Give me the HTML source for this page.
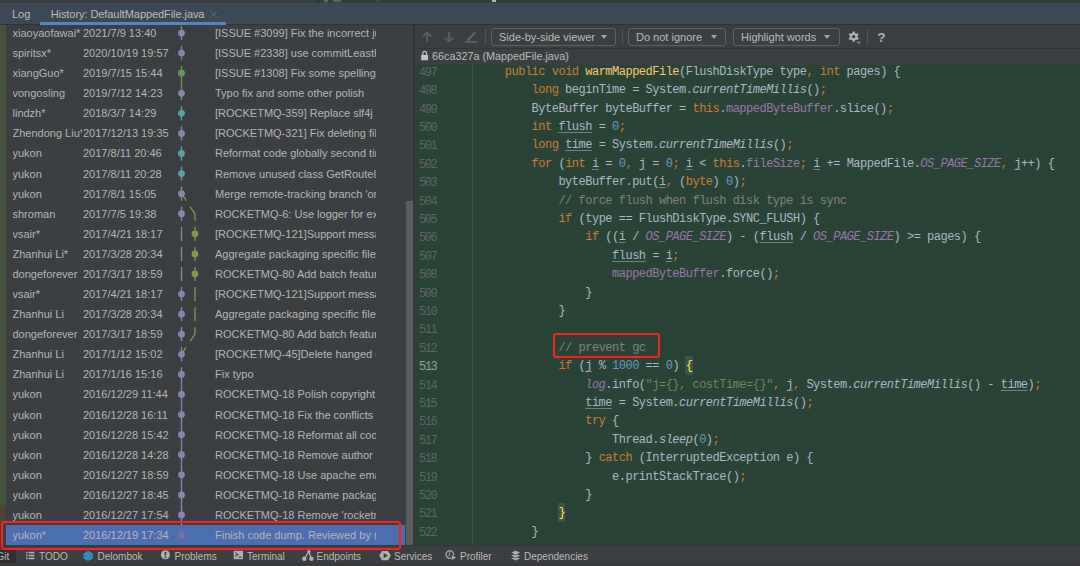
<!DOCTYPE html><html><head><meta charset="utf-8"><style>
*{margin:0;padding:0;box-sizing:border-box}
html,body{width:1080px;height:566px;overflow:hidden;background:#3c3f41;font-family:"Liberation Sans",sans-serif}
.abs{position:absolute}
#topl{left:0;top:0;width:318px;height:2px;background:#3b3d3f}#topline{left:0;top:2px;width:1080px;height:1px;background:#383c44}#tabline{left:0;top:24px;width:1080px;height:1px;background:#323538}
#topr{left:318px;top:0;width:762px;height:2px;background:#2a4434}
#tabs{left:0;top:3px;width:1080px;height:22px;background:#3d4856}
.tab{position:absolute;top:4px;font-size:11px;color:#bbbbbb;line-height:14px}
#uline{left:40.4px;top:22px;width:185.5px;height:2.6px;background:#4a88c7}
#left{left:0;top:25px;width:414px;height:520px;background:#3c3f41;overflow:hidden}
#gstrip{left:0;top:25px;width:6px;height:480px;background:#44523f}
#bstrip{left:0;top:505px;width:6px;height:20px;background:#4d4532}
.row{position:absolute;left:0;width:406px;height:20.08px;font-size:11px;color:#b5b5b5;line-height:20px;white-space:nowrap}
.row.sel{background:#4b6eaf;left:6px;width:400px}.row.sel .au{left:6.5px}.row.sel .dt{left:77px}.row.sel .msg{left:209px}
.au{position:absolute;left:12.5px;width:69px;overflow:hidden}
.dt{position:absolute;left:83px}
.msg{position:absolute;left:215px;width:161px;overflow:hidden}
#track{left:405px;top:25px;width:8px;height:520px;background:#3d4042}
#thumb{left:406px;top:201px;width:7.3px;height:343.5px;background:#5a5c5e}
#div{left:413px;top:25px;width:2px;height:520px;background:#323436}
#tb{left:415px;top:25px;width:665px;height:23px;background:#3c3f41}
#tbline{left:415px;top:48px;width:665px;height:1px;background:#323436}
#hdr{left:415px;top:49px;width:665px;height:16px;background:#3c3f41}
#hdrtxt{left:432px;top:50px;font-size:10.8px;line-height:13px;color:#bbbbbb}
.combo{position:absolute;top:28px;height:18px;border:1px solid #5e6162;border-radius:3px;font-size:11px;line-height:16px;color:#bbbbbb;padding-left:7px}
.tri{position:absolute;top:6px;width:0;height:0;border-left:3.7px solid transparent;border-right:3.7px solid transparent;border-top:4.5px solid #a0a3a5}
.sep{position:absolute;top:29px;width:1px;height:16px;background:#515455}
#code{left:415px;top:65px;width:665px;height:480px;background:#294436;overflow:hidden}
.ln{position:absolute;left:419px;width:30px;font-family:"Liberation Mono",monospace;font-size:12px;letter-spacing:-1.45px;line-height:18px;color:#606366;white-space:pre}
.ln.cur{color:#9c9c9c}
.cl{position:absolute;left:478px;font-family:"Liberation Mono",monospace;font-size:12px;letter-spacing:-0.5px;line-height:18px;color:#a9b7c6;white-space:pre}
.k{color:#cc7832}.fn{color:#ffc66d}.n{color:#6897bb}.f{color:#9876aa}.c{color:#808080}.s{color:#6a8759}
u{text-decoration:underline;text-decoration-thickness:1px;text-decoration-color:rgba(169,183,198,0.55);text-underline-offset:2px}
.bm{color:#ffef28;background:#3c5450;padding:3.4px 0.3px 1.5px 0.3px;margin:0 -0.3px}
#gutline{left:472px;top:65px;width:1px;height:480px;background:#3d5446}
#status{left:0;top:545px;width:1080px;height:17.5px;background:#3c3f41;border-top:1px solid #343638}
#sbot{left:0;top:562.5px;width:1080px;height:3.5px;background:#37393b}
#gittab{left:0;top:550px;width:16px;height:12.5px;background:#2d2f30}
.st{position:absolute;top:550px;font-size:10px;line-height:13px;color:#bbbbbb;white-space:nowrap}
.redbox{position:absolute;border:2.7px solid #ff1f1f;border-radius:3px}
</style></head><body><div id="topl" class="abs"></div><div id="topr" class="abs"></div>
<div id="tabs" class="abs"><div class="tab" style="left:12px">Log</div><div class="tab" style="left:50.7px;letter-spacing:-0.07px">History: DefaultMappedFile.java</div></div>
<div class="abs" style="left:317px;top:0;width:2px;height:2px;background:#333"></div><div class="abs" style="left:324px;top:0;width:4px;height:2px;background:#5b6660"></div><div class="abs" style="left:333px;top:0;width:8px;height:2px;background:#56625a"></div><div class="abs" style="left:377px;top:0;width:1px;height:2px;background:#5f625f"></div><div class="abs" style="left:491.5px;top:0;width:4px;height:2px;background:#a9b4bc"></div>
<div id="topline" class="abs"></div><div id="tabline" class="abs"></div><div id="uline" class="abs"></div>
<div id="left" class="abs"><div class="row" style="top:-2.00px"><span class="au">xiaoyaofawai*</span><span class="dt">2021/7/9 13:40</span><span class="msg">[ISSUE #3099] Fix the incorrect judgement</span></div><div class="row" style="top:18.08px"><span class="au">spiritsx*</span><span class="dt">2020/10/19 19:57</span><span class="msg">[ISSUE #2338] use commitLeastPages</span></div><div class="row" style="top:38.16px"><span class="au">xiangGuo*</span><span class="dt">2019/7/15 15:44</span><span class="msg">[ISSUE #1308] Fix some spelling errors</span></div><div class="row" style="top:58.24px"><span class="au">vongosling</span><span class="dt">2019/7/12 14:23</span><span class="msg">Typo fix and some other polish</span></div><div class="row" style="top:78.32px"><span class="au">lindzh*</span><span class="dt">2018/3/7 14:29</span><span class="msg">[ROCKETMQ-359] Replace slf4j api</span></div><div class="row" style="top:98.40px"><span class="au">Zhendong Liu*</span><span class="dt">2017/12/13 19:35</span><span class="msg">[ROCKETMQ-321] Fix deleting file</span></div><div class="row" style="top:118.48px"><span class="au">yukon</span><span class="dt">2017/8/11 20:46</span><span class="msg">Reformat code globally second time</span></div><div class="row" style="top:138.56px"><span class="au">yukon</span><span class="dt">2017/8/11 20:28</span><span class="msg">Remove unused class GetRouteInfo</span></div><div class="row" style="top:158.64px"><span class="au">yukon</span><span class="dt">2017/8/1 15:05</span><span class="msg">Merge remote-tracking branch &#x27;origin</span></div><div class="row" style="top:178.72px"><span class="au">shroman</span><span class="dt">2017/7/5 19:38</span><span class="msg">ROCKETMQ-6: Use logger for exceptions</span></div><div class="row" style="top:198.80px"><span class="au">vsair*</span><span class="dt">2017/4/21 18:17</span><span class="msg">[ROCKETMQ-121]Support message</span></div><div class="row" style="top:218.88px"><span class="au">Zhanhui Li*</span><span class="dt">2017/3/28 20:34</span><span class="msg">Aggregate packaging specific files</span></div><div class="row" style="top:238.96px"><span class="au">dongeforever</span><span class="dt">2017/3/17 18:59</span><span class="msg">ROCKETMQ-80 Add batch feature</span></div><div class="row" style="top:259.04px"><span class="au">vsair*</span><span class="dt">2017/4/21 18:17</span><span class="msg">[ROCKETMQ-121]Support message</span></div><div class="row" style="top:279.12px"><span class="au">Zhanhui Li</span><span class="dt">2017/3/28 20:34</span><span class="msg">Aggregate packaging specific files</span></div><div class="row" style="top:299.20px"><span class="au">dongeforever</span><span class="dt">2017/3/17 18:59</span><span class="msg">ROCKETMQ-80 Add batch feature</span></div><div class="row" style="top:319.28px"><span class="au">Zhanhui Li</span><span class="dt">2017/1/12 15:02</span><span class="msg">[ROCKETMQ-45]Delete hanged code</span></div><div class="row" style="top:339.36px"><span class="au">Zhanhui Li</span><span class="dt">2017/1/16 15:16</span><span class="msg">Fix typo</span></div><div class="row" style="top:359.44px"><span class="au">yukon</span><span class="dt">2016/12/29 11:44</span><span class="msg">ROCKETMQ-18 Polish copyright and</span></div><div class="row" style="top:379.52px"><span class="au">yukon</span><span class="dt">2016/12/28 16:11</span><span class="msg">ROCKETMQ-18 Fix the conflicts between</span></div><div class="row" style="top:399.60px"><span class="au">yukon</span><span class="dt">2016/12/28 15:42</span><span class="msg">ROCKETMQ-18 Reformat all code</span></div><div class="row" style="top:419.68px"><span class="au">yukon</span><span class="dt">2016/12/28 14:28</span><span class="msg">ROCKETMQ-18 Remove author and</span></div><div class="row" style="top:439.76px"><span class="au">yukon</span><span class="dt">2016/12/27 18:59</span><span class="msg">ROCKETMQ-18 Use apache email</span></div><div class="row" style="top:459.84px"><span class="au">yukon</span><span class="dt">2016/12/27 18:45</span><span class="msg">ROCKETMQ-18 Rename packages</span></div><div class="row" style="top:479.92px"><span class="au">yukon</span><span class="dt">2016/12/27 17:54</span><span class="msg">ROCKETMQ-18 Remove &#x27;rocketmq</span></div><div class="row sel" style="top:500.00px"><span class="au">yukon*</span><span class="dt">2016/12/19 17:34</span><span class="msg">Finish code dump. Reviewed by (Adam</span></div></div>
<div id="gstrip" class="abs"></div><div id="bstrip" class="abs"></div>
<div id="track" class="abs"></div><div id="thumb" class="abs"></div><div id="div" class="abs"></div>
<div id="tb" class="abs"></div><div id="tbline" class="abs"></div><div id="hdr" class="abs"></div>
<div id="hdrtxt" class="abs">66ca327a (MappedFile.java)</div>
<div class="combo" style="left:491px;width:125px">Side-by-side viewer<div class="tri" style="left:108.5px"></div></div>
<div class="sep" style="left:485px"></div><div class="sep" style="left:622px"></div><div class="sep" style="left:867px"></div>
<div class="combo" style="left:628px;width:98px">Do not ignore<div class="tri" style="left:81.5px"></div></div>
<div class="combo" style="left:733px;width:107px">Highlight words<div class="tri" style="left:90.3px"></div></div>
<div id="code" class="abs"></div><div id="gutline" class="abs"></div>
<div class="ln" style="top:63.70px">497</div><div class="cl" style="top:62.70px">    <span class="k">public</span> <span class="k">void</span> <span class="fn">warmMappedFile</span>(FlushDiskType type<span class="k">,</span> <span class="k">int</span> pages) {</div><div class="ln" style="top:82.10px">498</div><div class="cl" style="top:81.10px">        <span class="k">long</span> beginTime = System.<i>currentTimeMillis</i>()<span class="k">;</span></div><div class="ln" style="top:100.50px">499</div><div class="cl" style="top:99.50px">        ByteBuffer byteBuffer = <span class="k">this</span>.<span class="f">mappedByteBuffer</span>.slice()<span class="k">;</span></div><div class="ln" style="top:118.90px">500</div><div class="cl" style="top:117.90px">        <span class="k">int</span> <u>flush</u> = <span class="n">0</span><span class="k">;</span></div><div class="ln" style="top:137.30px">501</div><div class="cl" style="top:136.30px">        <span class="k">long</span> <u>time</u> = System.<i>currentTimeMillis</i>()<span class="k">;</span></div><div class="ln" style="top:155.70px">502</div><div class="cl" style="top:154.70px">        <span class="k">for</span> (<span class="k">int</span> <u>i</u> = <span class="n">0</span><span class="k">,</span> <u>j</u> = <span class="n">0</span><span class="k">;</span> <u>i</u> &lt; <span class="k">this</span>.<span class="f">fileSize</span><span class="k">;</span> <u>i</u> += MappedFile.<i class="f">OS_PAGE_SIZE</i><span class="k">,</span> <u>j</u>++) {</div><div class="ln" style="top:174.10px">503</div><div class="cl" style="top:173.10px">            byteBuffer.put(<u>i</u><span class="k">,</span> (<span class="k">byte</span>) <span class="n">0</span>)<span class="k">;</span></div><div class="ln" style="top:192.50px">504</div><div class="cl" style="top:191.50px">            <span class="c">// force flush when flush disk type is sync</span></div><div class="ln" style="top:210.90px">505</div><div class="cl" style="top:209.90px">            <span class="k">if</span> (type == FlushDiskType.SYNC_FLUSH) {</div><div class="ln" style="top:229.30px">506</div><div class="cl" style="top:228.30px">                <span class="k">if</span> ((<u>i</u> / <i class="f">OS_PAGE_SIZE</i>) - (<u>flush</u> / <i class="f">OS_PAGE_SIZE</i>) &gt;= pages) {</div><div class="ln" style="top:247.70px">507</div><div class="cl" style="top:246.70px">                    <u>flush</u> = <u>i</u><span class="k">;</span></div><div class="ln" style="top:266.10px">508</div><div class="cl" style="top:265.10px">                    <span class="f">mappedByteBuffer</span>.force()<span class="k">;</span></div><div class="ln" style="top:284.50px">509</div><div class="cl" style="top:283.50px">                }</div><div class="ln" style="top:302.90px">510</div><div class="cl" style="top:301.90px">            }</div><div class="ln" style="top:321.30px">511</div><div class="cl" style="top:320.30px"></div><div class="ln" style="top:339.70px">512</div><div class="cl" style="top:338.70px">            <span class="c">// prevent gc</span></div><div class="ln cur" style="top:358.10px">513</div><div class="cl" style="top:357.10px">            <span class="k">if</span> (<u>j</u> % <span class="n">1000</span> == <span class="n">0</span>) <span class="bm">{</span></div><div class="ln" style="top:376.50px">514</div><div class="cl" style="top:375.50px">                <i class="f">log</i>.info(<span class="s">"j={}, costTime={}"</span><span class="k">,</span> <u>j</u><span class="k">,</span> System.<i>currentTimeMillis</i>() - <u>time</u>)<span class="k">;</span></div><div class="ln" style="top:394.90px">515</div><div class="cl" style="top:393.90px">                <u>time</u> = System.<i>currentTimeMillis</i>()<span class="k">;</span></div><div class="ln" style="top:413.30px">516</div><div class="cl" style="top:412.30px">                <span class="k">try</span> {</div><div class="ln" style="top:431.70px">517</div><div class="cl" style="top:430.70px">                    Thread.<i>sleep</i>(<span class="n">0</span>)<span class="k">;</span></div><div class="ln" style="top:450.10px">518</div><div class="cl" style="top:449.10px">                } <span class="k">catch</span> (InterruptedException e) {</div><div class="ln" style="top:468.50px">519</div><div class="cl" style="top:467.50px">                    e.printStackTrace()<span class="k">;</span></div><div class="ln" style="top:486.90px">520</div><div class="cl" style="top:485.90px">                }</div><div class="ln" style="top:505.30px">521</div><div class="cl" style="top:504.30px">            <span class="bm">}</span></div><div class="ln" style="top:523.70px">522</div><div class="cl" style="top:522.70px">        }</div>
<svg class="abs" style="left:0;top:0" width="1080" height="566"><line x1="181.5" y1="26.01" x2="181.5" y2="33.04" stroke="#8a84b1" stroke-width="1.3"/><line x1="181.5" y1="33.04" x2="181.5" y2="40.07" stroke="#8a84b1" stroke-width="1.3"/><circle cx="181.5" cy="33.04" r="3.4" fill="#8a84b1"/><line x1="181.5" y1="46.09" x2="181.5" y2="53.12" stroke="#8a84b1" stroke-width="1.3"/><line x1="181.5" y1="53.12" x2="181.5" y2="60.15" stroke="#6a955f" stroke-width="1.3"/><circle cx="181.5" cy="53.12" r="3.4" fill="#8a84b1"/><line x1="181.5" y1="66.17" x2="181.5" y2="83.24" stroke="#6a955f" stroke-width="1.3"/><circle cx="181.5" cy="73.20" r="3.4" fill="#6a955f"/><line x1="181.5" y1="83.24" x2="181.5" y2="93.28" stroke="#6a955f" stroke-width="1.3"/><line x1="181.5" y1="93.28" x2="181.5" y2="100.31" stroke="#5c9fa8" stroke-width="1.3"/><circle cx="181.5" cy="93.28" r="3.4" fill="#8a84b1"/><line x1="181.5" y1="106.33" x2="181.5" y2="113.36" stroke="#5c9fa8" stroke-width="1.3"/><line x1="181.5" y1="113.36" x2="181.5" y2="120.39" stroke="#5c9fa8" stroke-width="1.3"/><circle cx="181.5" cy="113.36" r="3.4" fill="#5c9fa8"/><line x1="181.5" y1="126.41" x2="181.5" y2="133.44" stroke="#5c9fa8" stroke-width="1.3"/><line x1="181.5" y1="133.44" x2="181.5" y2="140.47" stroke="#5c9fa8" stroke-width="1.3"/><circle cx="181.5" cy="133.44" r="3.4" fill="#8a84b1"/><line x1="181.5" y1="146.49" x2="181.5" y2="153.52" stroke="#5c9fa8" stroke-width="1.3"/><line x1="181.5" y1="153.52" x2="181.5" y2="160.55" stroke="#5c9fa8" stroke-width="1.3"/><circle cx="181.5" cy="153.52" r="3.4" fill="#5c9fa8"/><line x1="181.5" y1="166.57" x2="181.5" y2="173.60" stroke="#5c9fa8" stroke-width="1.3"/><line x1="181.5" y1="173.60" x2="181.5" y2="180.63" stroke="#5c9fa8" stroke-width="1.3"/><circle cx="181.5" cy="173.60" r="3.4" fill="#5c9fa8"/><line x1="181.5" y1="186.65" x2="181.5" y2="193.68" stroke="#5c9fa8" stroke-width="1.3"/><line x1="181.5" y1="193.68" x2="181.5" y2="200.71" stroke="#8a84b1" stroke-width="1.3"/><line x1="181.5" y1="193.68" x2="186.5" y2="200.71" stroke="#7f9a49" stroke-width="1.3"/><circle cx="181.5" cy="193.68" r="3.4" fill="#8a84b1"/><line x1="181.5" y1="206.73" x2="181.5" y2="213.76" stroke="#8a84b1" stroke-width="1.3"/><line x1="181.5" y1="213.76" x2="181.5" y2="220.79" stroke="#8a84b1" stroke-width="1.3"/><line x1="190.0" y1="206.73" x2="195.0" y2="213.76" stroke="#7f9a49" stroke-width="1.3"/><line x1="195.0" y1="213.76" x2="195.0" y2="220.79" stroke="#7f9a49" stroke-width="1.3"/><circle cx="181.5" cy="213.76" r="3.4" fill="#8a84b1"/><line x1="181.5" y1="226.81" x2="181.5" y2="233.84" stroke="#8a84b1" stroke-width="1.3"/><line x1="181.5" y1="233.84" x2="181.5" y2="240.87" stroke="#8a84b1" stroke-width="1.3"/><line x1="195.0" y1="226.81" x2="195.0" y2="233.84" stroke="#7f9a49" stroke-width="1.3"/><line x1="195.0" y1="233.84" x2="195.0" y2="240.87" stroke="#7f9a49" stroke-width="1.3"/><circle cx="195.0" cy="233.84" r="3.4" fill="#7f9a49"/><line x1="181.5" y1="246.89" x2="181.5" y2="253.92" stroke="#8a84b1" stroke-width="1.3"/><line x1="181.5" y1="253.92" x2="181.5" y2="260.95" stroke="#8a84b1" stroke-width="1.3"/><line x1="195.0" y1="246.89" x2="195.0" y2="253.92" stroke="#7f9a49" stroke-width="1.3"/><line x1="195.0" y1="253.92" x2="195.0" y2="260.95" stroke="#7f9a49" stroke-width="1.3"/><circle cx="195.0" cy="253.92" r="3.4" fill="#7f9a49"/><line x1="181.5" y1="266.97" x2="181.5" y2="274.00" stroke="#8a84b1" stroke-width="1.3"/><line x1="181.5" y1="274.00" x2="181.5" y2="281.03" stroke="#8a84b1" stroke-width="1.3"/><line x1="195.0" y1="266.97" x2="195.0" y2="274.00" stroke="#7f9a49" stroke-width="1.3"/><line x1="195.0" y1="274.00" x2="195.0" y2="281.03" stroke="#7f9a49" stroke-width="1.3"/><circle cx="195.0" cy="274.00" r="3.4" fill="#7f9a49"/><line x1="181.5" y1="287.05" x2="181.5" y2="294.08" stroke="#8a84b1" stroke-width="1.3"/><line x1="181.5" y1="294.08" x2="181.5" y2="301.11" stroke="#8a84b1" stroke-width="1.3"/><line x1="195.0" y1="287.05" x2="195.0" y2="294.08" stroke="#7f9a49" stroke-width="1.3"/><line x1="195.0" y1="294.08" x2="195.0" y2="301.11" stroke="#7f9a49" stroke-width="1.3"/><circle cx="181.5" cy="294.08" r="3.4" fill="#8a84b1"/><line x1="181.5" y1="307.13" x2="181.5" y2="314.16" stroke="#8a84b1" stroke-width="1.3"/><line x1="181.5" y1="314.16" x2="181.5" y2="321.19" stroke="#8a84b1" stroke-width="1.3"/><line x1="195.0" y1="307.13" x2="195.0" y2="314.16" stroke="#7f9a49" stroke-width="1.3"/><line x1="195.0" y1="314.16" x2="195.0" y2="321.19" stroke="#7f9a49" stroke-width="1.3"/><circle cx="181.5" cy="314.16" r="3.4" fill="#8a84b1"/><line x1="181.5" y1="327.21" x2="181.5" y2="334.24" stroke="#8a84b1" stroke-width="1.3"/><line x1="181.5" y1="334.24" x2="181.5" y2="341.27" stroke="#8a84b1" stroke-width="1.3"/><line x1="195.0" y1="327.21" x2="195.0" y2="334.24" stroke="#7f9a49" stroke-width="1.3"/><line x1="195.0" y1="334.24" x2="190.0" y2="341.27" stroke="#7f9a49" stroke-width="1.3"/><circle cx="181.5" cy="334.24" r="3.4" fill="#8a84b1"/><line x1="181.5" y1="347.29" x2="181.5" y2="354.32" stroke="#8a84b1" stroke-width="1.3"/><line x1="181.5" y1="354.32" x2="181.5" y2="361.35" stroke="#8a84b1" stroke-width="1.3"/><line x1="186.0" y1="347.29" x2="181.5" y2="354.32" stroke="#7f9a49" stroke-width="1.3"/><circle cx="181.5" cy="354.32" r="3.4" fill="#8a84b1"/><line x1="181.5" y1="367.37" x2="181.5" y2="384.44" stroke="#8a84b1" stroke-width="1.3"/><circle cx="181.5" cy="374.40" r="3.4" fill="#8a84b1"/><line x1="181.5" y1="384.44" x2="181.5" y2="404.52" stroke="#8a84b1" stroke-width="1.3"/><circle cx="181.5" cy="394.48" r="3.4" fill="#8a84b1"/><line x1="181.5" y1="404.52" x2="181.5" y2="424.60" stroke="#8a84b1" stroke-width="1.3"/><circle cx="181.5" cy="414.56" r="3.4" fill="#8a84b1"/><line x1="181.5" y1="424.60" x2="181.5" y2="444.68" stroke="#8a84b1" stroke-width="1.3"/><circle cx="181.5" cy="434.64" r="3.4" fill="#8a84b1"/><line x1="181.5" y1="444.68" x2="181.5" y2="464.76" stroke="#8a84b1" stroke-width="1.3"/><circle cx="181.5" cy="454.72" r="3.4" fill="#8a84b1"/><line x1="181.5" y1="464.76" x2="181.5" y2="484.84" stroke="#8a84b1" stroke-width="1.3"/><circle cx="181.5" cy="474.80" r="3.4" fill="#8a84b1"/><line x1="181.5" y1="484.84" x2="181.5" y2="504.92" stroke="#8a84b1" stroke-width="1.3"/><circle cx="181.5" cy="494.88" r="3.4" fill="#8a84b1"/><line x1="181.5" y1="504.92" x2="181.5" y2="525.00" stroke="#8a84b1" stroke-width="1.3"/><circle cx="181.5" cy="514.96" r="3.4" fill="#8a84b1"/><line x1="181.5" y1="527.41" x2="181.5" y2="535.04" stroke="#6a6aa0" stroke-width="1.3"/><circle cx="181.5" cy="535.04" r="3.4" fill="#74709f"/></svg>
<div id="status" class="abs"></div><div id="sbot" class="abs"></div><div id="gittab" class="abs"></div>
<div class="st" style="left:-3.5px">Git</div>
<div class="st" style="left:39px">TODO</div>
<div class="st" style="left:97.5px">Delombok</div>
<div class="st" style="left:174.5px">Problems</div>
<div class="st" style="left:247px">Terminal</div>
<div class="st" style="left:316.5px">Endpoints</div>
<div class="st" style="left:394px">Services</div>
<div class="st" style="left:460px">Profiler</div>
<div class="st" style="left:524px">Dependencies</div>

<svg class="abs" style="left:0;top:0" width="1080" height="566">
<g stroke="#5f6163" stroke-width="1.5" fill="none" stroke-linecap="butt">
<path d="M427.2 32.5 V42 M423.3 36.4 L427.2 32.5 L431.1 36.4"/>
<path d="M449 32 V41.7 M445.1 37.8 L449 41.7 L452.9 37.8"/>
</g>
<path d="M468.2 39.6 L474.6 33.2" stroke="#5f6163" stroke-width="2.4" stroke-linecap="round"/><path d="M467 40.4 L467.6 38.4 L469 39.8 Z" fill="#5f6163"/>
<rect x="465" y="41" width="11.7" height="1.7" fill="#5f6163"/>
<g fill="#afb1b3">
<path fill-rule="evenodd" d="M852.42 32.92 L852.76 31.38 L854.64 31.38 L854.98 32.92 L856.25 33.65 L857.75 33.18 L858.69 34.80 L857.53 35.87 L857.53 37.33 L858.69 38.40 L857.75 40.02 L856.25 39.55 L854.98 40.28 L854.64 41.82 L852.76 41.82 L852.42 40.28 L851.15 39.55 L849.65 40.02 L848.71 38.40 L849.87 37.33 L849.87 35.87 L848.71 34.80 L849.65 33.18 L851.15 33.65 Z M855.40 36.60 A1.7 1.7 0 1 0 852.00 36.60 A1.7 1.7 0 1 0 855.40 36.60 Z"/>
<path d="M856.2 41.6 h5 l-2.5 2.6 Z" stroke="#3c3f41" stroke-width="0.8"/>
</g>
<text x="877.3" y="42" font-family="Liberation Sans" font-weight="bold" font-size="13.5" fill="#afb1b3">?</text>
<g fill="#c2c2c2">
<path fill-rule="evenodd" d="M422.2 55 V53.3 a2.5 2.5 0 0 1 5 0 V55 h-1.3 V53.3 a1.2 1.2 0 0 0 -2.4 0 V55 Z"/>
<rect x="421.2" y="55" width="6.9" height="5.2" rx="0.5"/>
</g>
<g stroke="#5f6973" stroke-width="1"><path d="M210.5 11 L217 17.5 M217 11 L210.5 17.5"/></g>
<!-- status icons -->
<g fill="#afb1b3">
<rect x="26" y="551.8" width="1.6" height="1.6"/><rect x="28.6" y="551.8" width="5.8" height="1.6"/>
<rect x="26" y="554.7" width="1.6" height="1.6"/><rect x="28.6" y="554.7" width="5.8" height="1.6"/>
<rect x="26" y="557.6" width="1.6" height="1.6"/><rect x="28.6" y="557.6" width="5.8" height="1.6"/>
</g>
<path d="M88.2 550.8 L92.8 553.4 L92.8 558.4 L88.2 561 L83.6 558.4 L83.6 553.4 Z" fill="#3592c4"/><g fill="#2a4a5e"><circle cx="86.2" cy="555.9" r="0.6"/><circle cx="90.2" cy="555.9" r="0.6"/><circle cx="88.2" cy="553.3" r="0.5"/><circle cx="88.2" cy="558.5" r="0.5"/></g>
<circle cx="165.4" cy="554.7" r="4.5" fill="#afb1b3"/>
<rect x="164.6" y="551.8" width="1.7" height="3.8" fill="#3c3f41"/>
<rect x="164.6" y="556.4" width="1.7" height="1.5" fill="#3c3f41"/>
<rect x="233.7" y="550.8" width="9.3" height="8.4" fill="#afb1b3"/>
<path d="M235.2 552.6 L237.8 554.4 L235.2 556.2" stroke="#3c3f41" stroke-width="1.1" fill="none"/>
<rect x="238.5" y="556.6" width="3.2" height="1.1" fill="#3c3f41"/>
<g stroke="#afb1b3" stroke-width="1.2" fill="none"><path d="M308.9 551.8 L304.3 558.6 M308.9 551.8 L311.2 558.6"/></g>
<g fill="#afb1b3"><circle cx="308.9" cy="551.8" r="1.7"/><circle cx="304.3" cy="558.7" r="2.2"/><circle cx="311.4" cy="558.7" r="2.2"/></g>
<path d="M382 551 h6 l2.8 4.6 l-2.8 4.6 h-6 l-2.8 -4.6 Z" fill="#afb1b3"/>
<path d="M383.6 553 L388 555.6 L383.6 558.2 Z" fill="#3c3f41"/>
<circle cx="449.8" cy="554.6" r="3.8" stroke="#afb1b3" stroke-width="1.2" fill="none"/>
<path d="M449.6 552.3 V554.9 L448 556.5" stroke="#afb1b3" stroke-width="1" fill="none"/>
<path d="M451.4 554.6 L456.8 557.6 L451.4 560.6 Z" fill="#afb1b3" stroke="#3c3f41" stroke-width="0.8"/>
<g fill="#afb1b3" stroke="#3c3f41" stroke-width="0.7">
<path d="M515.7 556.2 L520.8 558.4 L515.7 560.8 L510.6 558.4 Z"/>
<path d="M515.7 553.4 L520.8 555.6 L515.7 558 L510.6 555.6 Z"/>
<path d="M515.7 550.3 L520.8 552.6 L515.7 555 L510.6 552.6 Z"/>
</g>
</svg>

<div class="redbox" style="left:1.3px;top:521px;width:400px;height:29.2px"></div>
<div class="redbox" style="left:553px;top:332.5px;width:107px;height:25.6px"></div></body></html>
